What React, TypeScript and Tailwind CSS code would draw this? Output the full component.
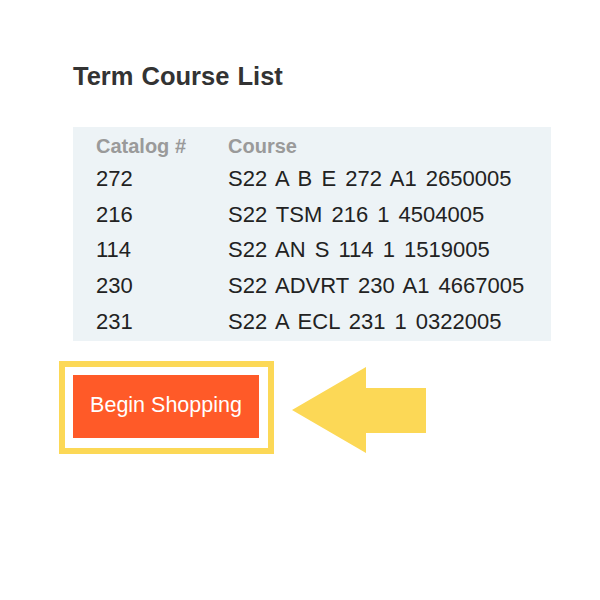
import React from "react";

const rows = [
  ["272", "S22 A B E 272 A1 2650005"],
  ["216", "S22 TSM 216 1 4504005"],
  ["114", "S22 AN S 114 1 1519005"],
  ["230", "S22 ADVRT 230 A1 4667005"],
  ["231", "S22 A ECL 231 1 0322005"],
];

export default function App() {
  return (
    <div
      className="w-[600px] h-[600px] bg-white pl-[59px] pt-[61px] [word-spacing:3px]"
      style={{ fontFamily: '"Liberation Sans", Arial, sans-serif' }}
    >
      <h1 className="ml-[14px] text-[25.5px] leading-[30px] font-bold text-[#333333] [word-spacing:1px]">
        Term Course List
      </h1>
      <div className="ml-[14px] mt-[36px] w-[478px] bg-[#edf3f6] pt-[3px] pb-[2px] pl-[23px]">
        <div className="flex h-[31px] items-center text-[20px] font-bold text-[#9a9a9a] [word-spacing:0px]">
          <div className="w-[132px]">Catalog #</div>
          <div>Course</div>
        </div>
        {rows.map(([c, n]) => (
          <div
            key={c}
            className="flex h-[35.6px] items-center text-[22px] text-[#222222]"
          >
            <div className="w-[132px]">{c}</div>
            <div>{n}</div>
          </div>
        ))}
      </div>
      <div className="mt-[20px] flex items-start">
        <div className="border-[6px] border-[#fcd856] pt-[8px] pb-[10px] pl-[8px] pr-[9px]">
          <button className="w-[186px] h-[63px] pb-[2px] bg-[#ff5a28] text-white text-[21.5px] [word-spacing:0px] flex items-center justify-center">
            Begin Shopping
          </button>
        </div>
        <svg
          width="134"
          height="86"
          viewBox="0 0 134 86"
          className="ml-[18px] mt-[6px]"
        >
          <polygon
            points="0,43 74,0 74,21 134,21 134,66 74,66 74,86"
            fill="#fcd856"
          />
        </svg>
      </div>
    </div>
  );
}
